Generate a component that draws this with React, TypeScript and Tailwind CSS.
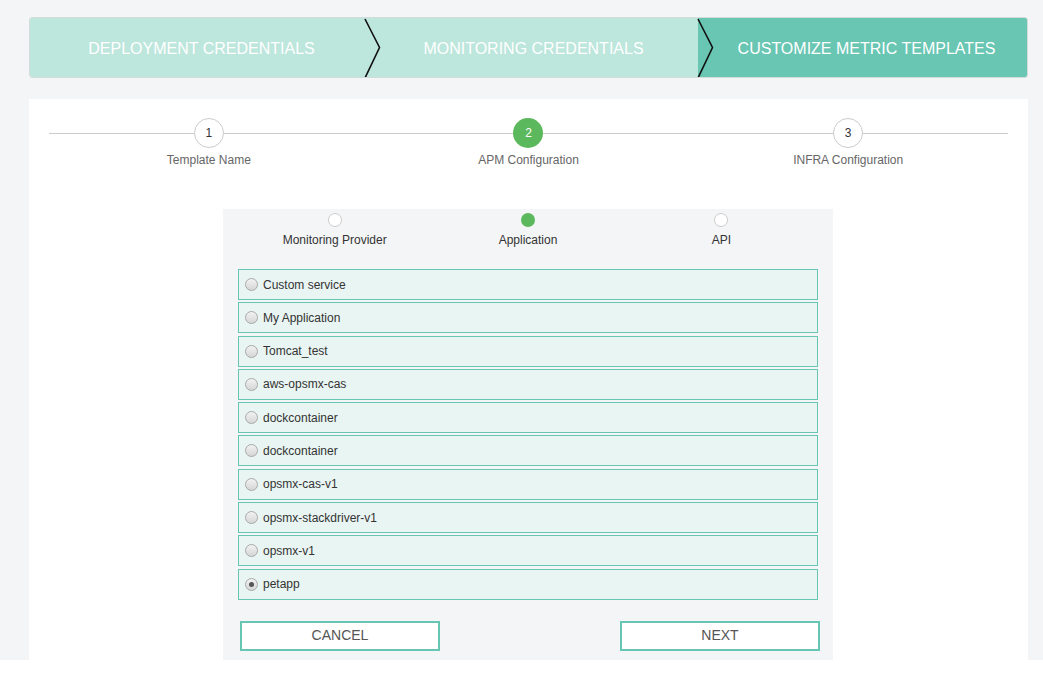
import React from "react";

const apps = [
  "Custom service",
  "My Application",
  "Tomcat_test",
  "aws-opsmx-cas",
  "dockcontainer",
  "dockcontainer",
  "opsmx-cas-v1",
  "opsmx-stackdriver-v1",
  "opsmx-v1",
  "petapp",
];

function Chevron() {
  return (
    <svg
      className="absolute left-[-1px] top-0 h-[61px] w-[18px]"
      viewBox="0 0 18 61"
      fill="none"
    >
      <path d="M1 1 L15.5 29.5 L1 60" stroke="#111" strokeWidth="1.6" />
    </svg>
  );
}

export default function App() {
  const font = { fontFamily: '"Liberation Sans", Arial, sans-serif' };
  return (
    <div style={font}>
      <div className="h-[660px] bg-[#f4f5f7] pl-[29px] pr-[15px] pt-[17px] flex flex-col">
        {/* Banner */}
        <div className="flex h-[61px] rounded-[3px] overflow-hidden border border-[#d4dcda] text-white text-[16px]">
          <div className="w-[335px] bg-[#bde6dc] flex items-center justify-center pl-[8px] pt-[2px]">
            DEPLOYMENT CREDENTIALS
          </div>
          <div className="relative w-[333px] bg-[#bde6dc] flex items-center justify-center pl-[4px] pt-[2px]">
            <Chevron />
            MONITORING CREDENTIALS
          </div>
          <div className="relative flex-1 bg-[#68c6b3] flex items-center justify-center pl-[8px] pt-[2px]">
            <Chevron />
            CUSTOMIZE METRIC TEMPLATES
          </div>
        </div>

        {/* Card */}
        <div className="mt-[21px] flex-1 bg-white flex flex-col">
          {/* Stepper */}
          <div className="relative mx-[20px] mt-[19px] grid grid-cols-3">
            <div className="absolute left-0 right-0 top-[15px] h-px bg-[#cccccc]" />
            {[
              { n: "1", label: "Template Name", active: false },
              { n: "2", label: "APM Configuration", active: true },
              { n: "3", label: "INFRA Configuration", active: false },
            ].map((s) => (
              <div key={s.n} className="relative flex flex-col items-center">
                <div
                  className={
                    s.active
                      ? "w-[30px] h-[30px] rounded-full bg-[#5cb85c] text-white text-[12px] flex items-center justify-center"
                      : "w-[30px] h-[30px] rounded-full bg-white border border-[#cccccc] text-[#333] text-[12px] flex items-center justify-center"
                  }
                >
                  {s.n}
                </div>
                <div className="mt-[5px] text-[12px] leading-[14px] text-[#666]">
                  {s.label}
                </div>
              </div>
            ))}
          </div>

          {/* Inner panel */}
          <div className="ml-[194px] mt-[42px] w-[610px] flex-1 bg-[#f4f5f7] flex flex-col">
            <div className="mx-[15px] mt-[4px] grid grid-cols-3">
              {[
                { label: "Monitoring Provider", active: false },
                { label: "Application", active: true },
                { label: "API", active: false },
              ].map((s) => (
                <div key={s.label} className="flex flex-col items-center">
                  <div
                    className={
                      s.active
                        ? "w-[14px] h-[14px] rounded-full bg-[#5cb85c]"
                        : "w-[14px] h-[14px] rounded-full bg-white border border-[#cccccc]"
                    }
                  />
                  <div className="mt-[6px] text-[12px] leading-[14px] text-[#333]">
                    {s.label}
                  </div>
                </div>
              ))}
            </div>

            <div className="mx-[15px] mt-[22px] flex flex-col">
              {apps.map((a, i) => (
                <div
                  key={i}
                  className="h-[31px] mb-[2.3px] border border-[#67c6b3] bg-[#e9f5f2] flex items-center pl-[6px] text-[12px] text-[#333]"
                >
                  <span className="relative w-[13px] h-[13px] rounded-full border border-[#a9a9a9] bg-gradient-to-b from-[#f2f2f2] to-[#d6d6d6] flex items-center justify-center">
                    {i === apps.length - 1 && (
                      <span className="w-[5px] h-[5px] rounded-full bg-[#555]" />
                    )}
                  </span>
                  <span className="ml-[5px]">{a}</span>
                </div>
              ))}
            </div>

            <div className="mt-[19px] pl-[17px] pr-[13px] flex justify-between">
              <button className="w-[200px] h-[30px] border-2 border-[#67c6b3] bg-white text-[14px] text-[#555]">
                CANCEL
              </button>
              <button className="w-[200px] h-[30px] border-2 border-[#67c6b3] bg-white text-[14px] text-[#555]">
                NEXT
              </button>
            </div>
          </div>
        </div>
      </div>
    </div>
  );
}
